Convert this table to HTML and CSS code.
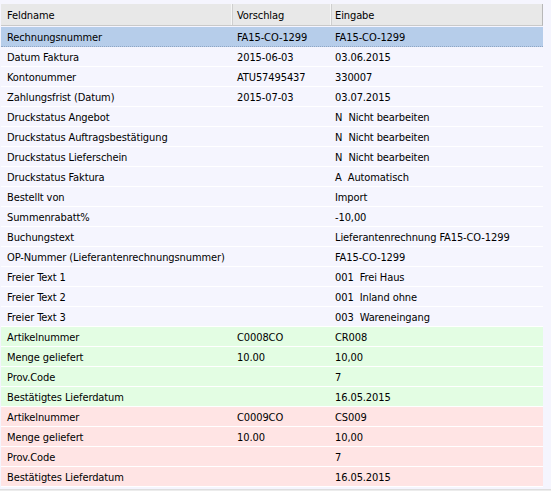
FILE: index.html
```html
<!DOCTYPE html>
<html lang="de">
<head>
<meta charset="utf-8">
<title>Felder</title>
<link rel="stylesheet" href="styles.css">
</head>
<body>
<div class="grid">
  <div class="head">
    <div class="hc c1">Feldname</div>
    <div class="hc c2">Vorschlag</div>
    <div class="hc c3">Eingabe</div>
  </div>
  <div class="row sel"><div class="c1">Rechnungsnummer</div><div class="c2">FA15-CO-1299</div><div class="c3">FA15-CO-1299</div></div>
  <div class="row"><div class="c1">Datum Faktura</div><div class="c2">2015-06-03</div><div class="c3">03.06.2015</div></div>
  <div class="row"><div class="c1">Kontonummer</div><div class="c2">ATU57495437</div><div class="c3">330007</div></div>
  <div class="row"><div class="c1">Zahlungsfrist (Datum)</div><div class="c2">2015-07-03</div><div class="c3">03.07.2015</div></div>
  <div class="row"><div class="c1">Druckstatus Angebot</div><div class="c2"></div><div class="c3">N&nbsp; Nicht bearbeiten</div></div>
  <div class="row"><div class="c1">Druckstatus Auftragsbestätigung</div><div class="c2"></div><div class="c3">N&nbsp; Nicht bearbeiten</div></div>
  <div class="row"><div class="c1">Druckstatus Lieferschein</div><div class="c2"></div><div class="c3">N&nbsp; Nicht bearbeiten</div></div>
  <div class="row"><div class="c1">Druckstatus Faktura</div><div class="c2"></div><div class="c3">A&nbsp; Automatisch</div></div>
  <div class="row"><div class="c1">Bestellt von</div><div class="c2"></div><div class="c3">Import</div></div>
  <div class="row"><div class="c1">Summenrabatt%</div><div class="c2"></div><div class="c3">-10,00</div></div>
  <div class="row"><div class="c1">Buchungstext</div><div class="c2"></div><div class="c3">Lieferantenrechnung FA15-CO-1299</div></div>
  <div class="row"><div class="c1">OP-Nummer (Lieferantenrechnungsnummer)</div><div class="c2"></div><div class="c3">FA15-CO-1299</div></div>
  <div class="row"><div class="c1">Freier Text 1</div><div class="c2"></div><div class="c3">001&nbsp; Frei Haus</div></div>
  <div class="row"><div class="c1">Freier Text 2</div><div class="c2"></div><div class="c3">001&nbsp; Inland ohne</div></div>
  <div class="row"><div class="c1">Freier Text 3</div><div class="c2"></div><div class="c3">003&nbsp; Wareneingang</div></div>
  <div class="row green"><div class="c1">Artikelnummer</div><div class="c2">C0008CO</div><div class="c3">CR008</div></div>
  <div class="row green"><div class="c1">Menge geliefert</div><div class="c2">10.00</div><div class="c3">10,00</div></div>
  <div class="row green"><div class="c1">Prov.Code</div><div class="c2"></div><div class="c3">7</div></div>
  <div class="row green"><div class="c1">Bestätigtes Lieferdatum</div><div class="c2"></div><div class="c3">16.05.2015</div></div>
  <div class="row pink"><div class="c1">Artikelnummer</div><div class="c2">C0009CO</div><div class="c3">CS009</div></div>
  <div class="row pink"><div class="c1">Menge geliefert</div><div class="c2">10.00</div><div class="c3">10,00</div></div>
  <div class="row pink"><div class="c1">Prov.Code</div><div class="c2"></div><div class="c3">7</div></div>
  <div class="row pink"><div class="c1">Bestätigtes Lieferdatum</div><div class="c2"></div><div class="c3">16.05.2015</div></div>
</div>
<div class="hscroll"></div>
</body>
</html>
```
FILE: styles.css
```css
html, body {
  margin: 0;
  padding: 0;
  height: 100%;
  overflow: hidden;
}
body {
  background: #f5f5fe;
  font-family: "DejaVu Sans Condensed", "DejaVu Sans", sans-serif;
  font-stretch: condensed;
  font-size: 11px;
  letter-spacing: -0.1px;
  color: #000;
  display: flex;
  flex-direction: column;
}
.grid {
  padding: 4px 0 0 1px;
  width: 542px;
  display: flex;
  flex-direction: column;
}
.head {
  display: grid;
  grid-template-columns: 232px 99px 1fr;
  height: 21px;
  background: #e8e8e8;
  border-bottom: 1px solid #c9c9c9;
  border-right: 1px solid #b8b8b8;
  margin-bottom: 1px;
}
.hc {
  display: flex;
  align-items: center;
  padding-top: 1px;
  border-right: 1px solid #cfcfcf;
  box-shadow: inset -1px 0 0 #f6f6f6;
}
.hc.c3 { border-right: none; box-shadow: none; }
.row {
  display: grid;
  grid-template-columns: 232px 99px 1fr;
  height: 19px;
  border-bottom: 1px solid #ffffff;
  align-items: center;
}
.row > div { padding-top: 1px; }
.c1 { padding-left: 6px; white-space: nowrap; }
.c2 { padding-left: 4px; white-space: nowrap; }
.c3 { padding-left: 3px; white-space: nowrap; }
.row.sel {
  background: #b6cdea;
  border-bottom: 1px dotted #8fa6c4;
}
.row.green { background: #e3fde3; }
.row.pink { background: #ffe4e4; }
.hscroll {
  margin-top: 2px;
  height: 3px;
  border-top: 1px solid #dedede;
  background: #ececec;
}
```
